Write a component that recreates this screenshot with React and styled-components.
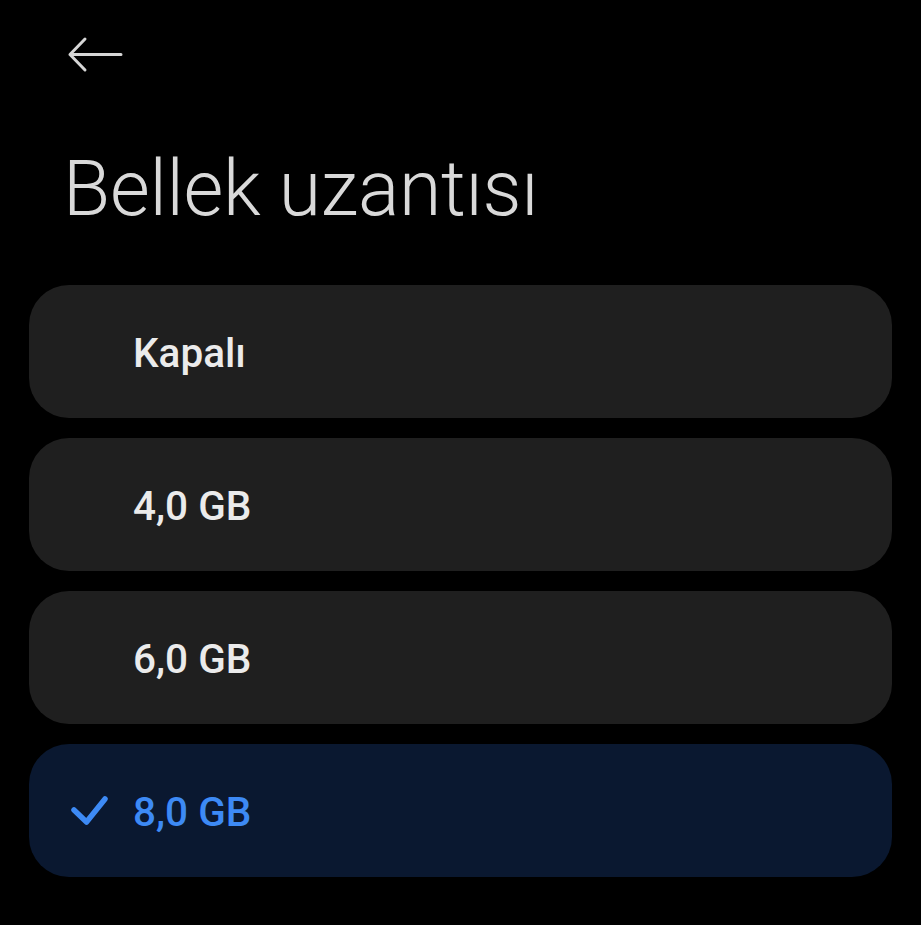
import React from "react";
import styled, { createGlobalStyle } from "styled-components";

const Global = createGlobalStyle`
  html, body { margin: 0; padding: 0; background: #000; }
  body { font-family: Roboto, "Noto Sans", sans-serif; }
`;

const Page = styled.div`
  width: 921px;
  height: 925px;
  background: #000;
  box-sizing: border-box;
  padding: 37px 29px 0 29px;
  overflow: hidden;
`;

const Header = styled.header`
  display: flex;
  flex-direction: column;
`;

const BackButton = styled.button`
  display: flex;
  align-items: center;
  width: 56px;
  height: 35px;
  padding: 0;
  margin-left: 38px;
  background: none;
  border: none;
  color: #d6d6d6;
`;

const Title = styled.h1`
  margin: 72px 0 0 34px;
  font-family: Roboto, sans-serif;
  font-weight: 300;
  font-size: 77px;
  line-height: 90px;
  color: #d9d9d9;
  letter-spacing: -0.3px;
`;

const List = styled.ul`
  list-style: none;
  margin: 51px 0 0 0;
  padding: 0;
  display: flex;
  flex-direction: column;
  gap: 20px;
`;

const Option = styled.li`
  height: 133px;
  border-radius: 40px;
  background: ${(p) => (p.$selected ? "#0a1830" : "#1f1f1f")};
  display: flex;
  align-items: center;
  padding-left: 41px;
  box-sizing: border-box;
`;

const IconSlot = styled.span`
  width: 64px;
  display: flex;
  align-items: center;
`;

const Label = styled.span`
  font-family: Roboto, sans-serif;
  font-weight: 500;
  font-size: 40.5px;
  color: ${(p) => (p.$selected ? "#3d8af5" : "#ebebeb")};
  margin-top: 2px;
  margin-left: -1px;
`;

const Check = () => (
  <svg width="40" height="32" viewBox="0 0 40 32" fill="none">
    <path
      d="M4 15 L16.5 27 L35 4"
      stroke="#3d8af5"
      strokeWidth="5.5"
      strokeLinecap="round"
      strokeLinejoin="round"
    />
  </svg>
);

const BackArrow = () => (
  <svg width="56" height="37" viewBox="0 0 56 37" fill="none">
    <path
      d="M54 18.5 H3 M18 3 L3 18.5 L18 34"
      stroke="#d6d6d6"
      strokeWidth="3"
      strokeLinecap="round"
      strokeLinejoin="round"
    />
  </svg>
);

const options = [
  { label: "Kapalı" },
  { label: "4,0 GB" },
  { label: "6,0 GB" },
  { label: "8,0 GB", selected: true },
];

export default function App() {
  return (
    <>
      <Global />
      <Page>
        <Header>
          <BackButton aria-label="Geri">
            <BackArrow />
          </BackButton>
          <Title>Bellek uzantısı</Title>
        </Header>
        <List>
          {options.map((o) => (
            <Option key={o.label} $selected={o.selected}>
              <IconSlot>{o.selected && <Check />}</IconSlot>
              <Label $selected={o.selected}>{o.label}</Label>
            </Option>
          ))}
        </List>
      </Page>
    </>
  );
}
